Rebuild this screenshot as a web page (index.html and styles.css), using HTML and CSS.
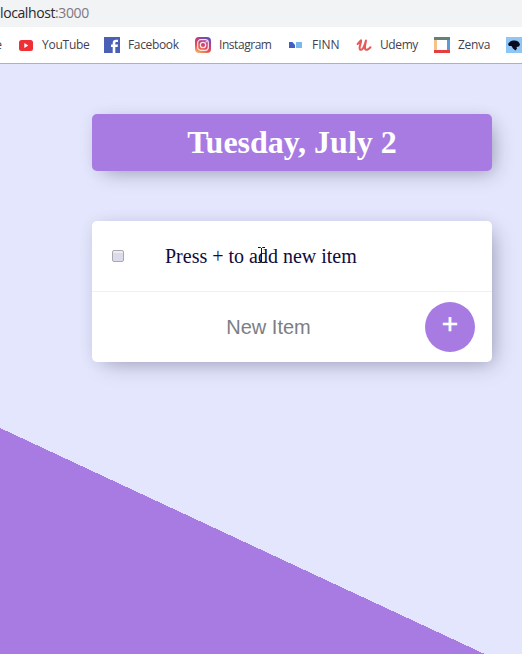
FILE: index.html
```html
<!DOCTYPE html>
<html lang="en">
<head>
<meta charset="utf-8">
<title>To-do list</title>
<link rel="stylesheet" href="styles.css">
</head>
<body>
<div class="address"><span class="host">localhost</span><span class="port">:3000</span></div>
<nav class="bookmarks">
  <span class="cut">e</span>
  <a class="mark"><svg viewBox="0 0 16 16"><rect x="1" y="3" width="14" height="11" rx="2.5" fill="#ee3036"/><path d="M6.3 6v5l4-2.5z" fill="#fff"/></svg><span class="w-youtube">YouTube</span></a>
  <a class="mark"><svg viewBox="0 0 16 16"><path d="M0 0h16v16H0z" fill="#4a60b5"/><path d="M8.7 16V10H7V7.5h1.700V6c0-2.200 1.300-3.200 3.200-3.200H14v2.300h-1.400c-1 0-1.300.4-1.300 1.200v1.200H14l-.4 2.500h-2.300v6z" fill="#fff"/></svg><span class="w-facebook">Facebook</span></a>
  <a class="mark"><svg viewBox="0 0 16 16"><defs><linearGradient id="ig" x1="0.2" y1="1" x2="0.7" y2="0"><stop offset="0" stop-color="#f4b465"/><stop offset=".35" stop-color="#e5504d"/><stop offset=".68" stop-color="#bc3c88"/><stop offset="1" stop-color="#5e50bd"/></linearGradient></defs><rect width="16" height="16" rx="4" fill="url(#ig)"/><rect x="2.7" y="2.7" width="10.6" height="10.6" rx="3" fill="none" stroke="#fbe5e8" stroke-width="1.2"/><circle cx="8" cy="8" r="2.7" fill="none" stroke="#fbe5e8" stroke-width="1.3"/><circle cx="11.2" cy="4.8" r=".7" fill="#fff"/></svg><span class="w-instagram">Instagram</span></a>
  <a class="mark"><svg viewBox="0 0 16 16"><path d="M2 5h3.500L8 8v3H2z" fill="#405fc4"/><path d="M9 5h6v6H9z" fill="#78b8ee"/></svg><span class="w-finn">FINN</span></a>
  <a class="mark"><svg viewBox="0 0 16 16"><path d="M1.6 7C3 5.800 4 4 5 3.200 6 4 3.600 8 3.600 10.700c0 3 2.300 2.400 3.600.2C8.500 8.800 9.400 6 10 3.500 9.400 7 8.600 9.500 9 11.500c.5 2.500 3.200 1.200 5.500-1.200" fill="none" stroke="#e45b57" stroke-width="2" stroke-linecap="round" stroke-linejoin="round"/></svg><span class="w-udemy">Udemy</span></a>
  <a class="mark"><svg viewBox="0 0 16 16"><path d="M0 3h3v10H0z" fill="#f5c38a"/><path d="M13 3h3v10h-3z" fill="#5a9bd5"/><path d="M0 0h16v3H0z" fill="#648077"/><path d="M0 13h16v3H0z" fill="#e83c43"/></svg><span class="w-zenva">Zenva</span></a>
  <a class="mark"><svg viewBox="0 0 16 16"><path d="M0 0h16v16H0z" fill="#8fc6f5"/><path d="M2 7c1-1 2-3 5-3.500 4-.5 6 1 7 4l-1 2-2.500.5.5 1.500-1.500 2L7 11.500 5.500 9H3z" fill="#080c20"/></svg></a>
</nav>
<main class="page">
  <header class="box heading"><h1>Tuesday, July 2</h1></header>
  <section class="box">
    <div class="item">
      <span class="check"></span>
      <p>Press + to add new item</p>
      <svg class="caret" viewBox="0 0 9 16"><path d="M1 .5h2.500l1 1 1-1H8M4.500 1v14M1 15.500h2.500l1-1 1 1H8" fill="none" stroke="#111" stroke-width="1"/></svg>
    </div>
    <form class="entry">
      <input type="text" placeholder="New Item">
      <button type="button">+</button>
    </form>
  </section>
</main>
</body>
</html>
```
FILE: styles.css
```css
* { box-sizing: border-box; }
html, body { height: 100%; }
body {
  margin: 0;
  display: flex;
  flex-direction: column;
  overflow: hidden;
  background: #e4e6fd;
  font-family: "Liberation Serif", serif;
}
.address {
  flex: none;
  height: 27px;
  background: #f1f3f4;
  font: 14px/26px "Open Sans", sans-serif;
  letter-spacing: -0.4px;
  color: #29292f;
  white-space: nowrap;
}
.port { color: #7d7885; }
.bookmarks {
  flex: none;
  display: flex;
  align-items: center;
  gap: 16px;
  height: 37px;
  background: #fff;
  border-bottom: 1px solid #b0b0b7;
  font: 12px/16px "Open Sans", sans-serif;
  color: #443f4e;
}
.cut {
  width: 2px;
  display: flex;
  justify-content: flex-end;
}
.mark {
  flex: none;
  display: flex;
  align-items: center;
  gap: 8px;
  white-space: nowrap;
}
.mark svg { width: 16px; height: 16px; display: block; }
.w-youtube { width: 46px; letter-spacing: -0.25px; }
.w-facebook { width: 51px; letter-spacing: -0.35px; }
.w-instagram { width: 52px; letter-spacing: -0.45px; }
.w-finn { width: 29px; padding-left: 1px; }
.w-udemy { width: 38px; letter-spacing: -0.4px; }
.w-zenva { width: 32px; letter-spacing: -0.3px; }
.page {
  flex: 1;
  display: flex;
  flex-direction: column;
  gap: 50px;
  padding: 50px 30px 0 92px;
  background: linear-gradient(205deg, #e4e6fd 550.5px, #a87be2 550.5px);
}
.box {
  width: 400px;
  background: #fff;
  border-radius: 5px;
  box-shadow:
    7px 7px 20px -6px rgba(40, 38, 65, 0.36),
    0 0 16px rgba(40, 40, 80, 0.06);
}
.heading {
  height: 57px;
  background: #a87be2;
  text-align: center;
}
h1 {
  margin: 0;
  color: #fff;
  font-size: 32px;
  line-height: 57px;
}
.item {
  position: relative;
  display: flex;
  align-items: center;
  height: 71px;
  padding: 0 20px;
  border-bottom: 1px solid #f0f0f2;
}
.check {
  width: 12px;
  height: 12px;
  border: 1px solid #aaa8b1;
  border-radius: 2px;
  background: linear-gradient(#eeeeec 25%, #dbdbec 25%);
}
.item p {
  margin: 0 0 0 41px;
  color: #100c3c;
  font-size: 20px;
  line-height: 24px;
}
.caret {
  position: absolute;
  left: 165px;
  top: 26px;
  width: 9px;
  height: 16px;
}
.entry {
  display: flex;
  align-items: center;
  height: 70px;
  padding-right: 17px;
}
input {
  flex: 1;
  min-width: 0;
  height: 50px;
  padding: 0 0 0 20px;
  border: 0;
  background: none;
  font: 20px "Liberation Sans", sans-serif;
  text-align: center;
}
input::placeholder { color: #7d7d84; }
button {
  width: 50px;
  height: 50px;
  padding: 0 0 6px;
  border: 0;
  border-radius: 50%;
  background: #a87be2;
  color: #fff;
  font: 28px/44px "Liberation Sans", sans-serif;
  -webkit-text-stroke: 0.5px #fff;
}
```
